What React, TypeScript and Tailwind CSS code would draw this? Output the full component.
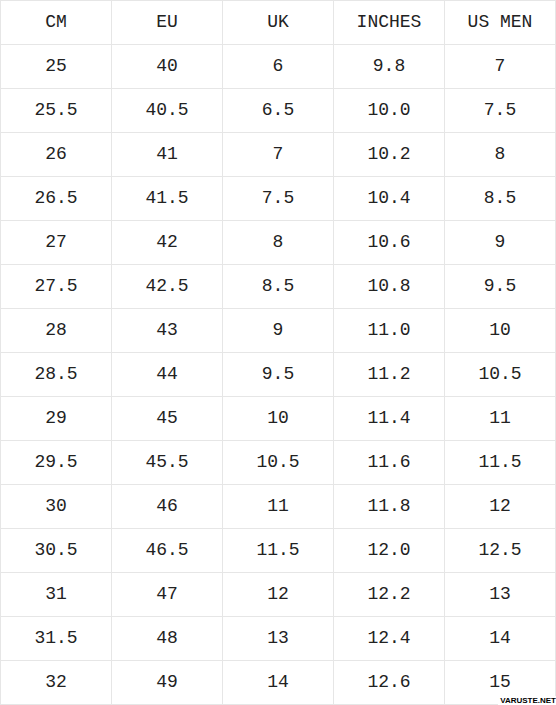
import React from 'react';

const headers = ['CM', 'EU', 'UK', 'INCHES', 'US MEN'];

const rows: string[][] = [
  ['25', '40', '6', '9.8', '7'],
  ['25.5', '40.5', '6.5', '10.0', '7.5'],
  ['26', '41', '7', '10.2', '8'],
  ['26.5', '41.5', '7.5', '10.4', '8.5'],
  ['27', '42', '8', '10.6', '9'],
  ['27.5', '42.5', '8.5', '10.8', '9.5'],
  ['28', '43', '9', '11.0', '10'],
  ['28.5', '44', '9.5', '11.2', '10.5'],
  ['29', '45', '10', '11.4', '11'],
  ['29.5', '45.5', '10.5', '11.6', '11.5'],
  ['30', '46', '11', '11.8', '12'],
  ['30.5', '46.5', '11.5', '12.0', '12.5'],
  ['31', '47', '12', '12.2', '13'],
  ['31.5', '48', '13', '12.4', '14'],
  ['32', '49', '14', '12.6', '15'],
];

const cell = 'h-[44px] w-[111px] border border-[#e6e6e6] text-center align-middle p-0';

export default function App() {
  return (
    <div className="relative w-[556px] h-[705px] bg-white overflow-hidden">
      <table className="border-collapse table-fixed text-[18px] text-[#222] font-['Liberation_Mono',monospace]">
        <thead>
          <tr>
            {headers.map((h) => (
              <th key={h} className={`${cell} font-normal`}>{h}</th>
            ))}
          </tr>
        </thead>
        <tbody>
          {rows.map((r, i) => (
            <tr key={i}>
              {r.map((v, j) => (
                <td key={j} className={cell}>{v}</td>
              ))}
            </tr>
          ))}
        </tbody>
      </table>
      <div className="absolute right-0 bottom-0 bg-white pl-[2px] pt-[1px] text-[8px] leading-[8px] font-bold text-black font-['Liberation_Sans',sans-serif]">
        VARUSTE.NET
      </div>
    </div>
  );
}
